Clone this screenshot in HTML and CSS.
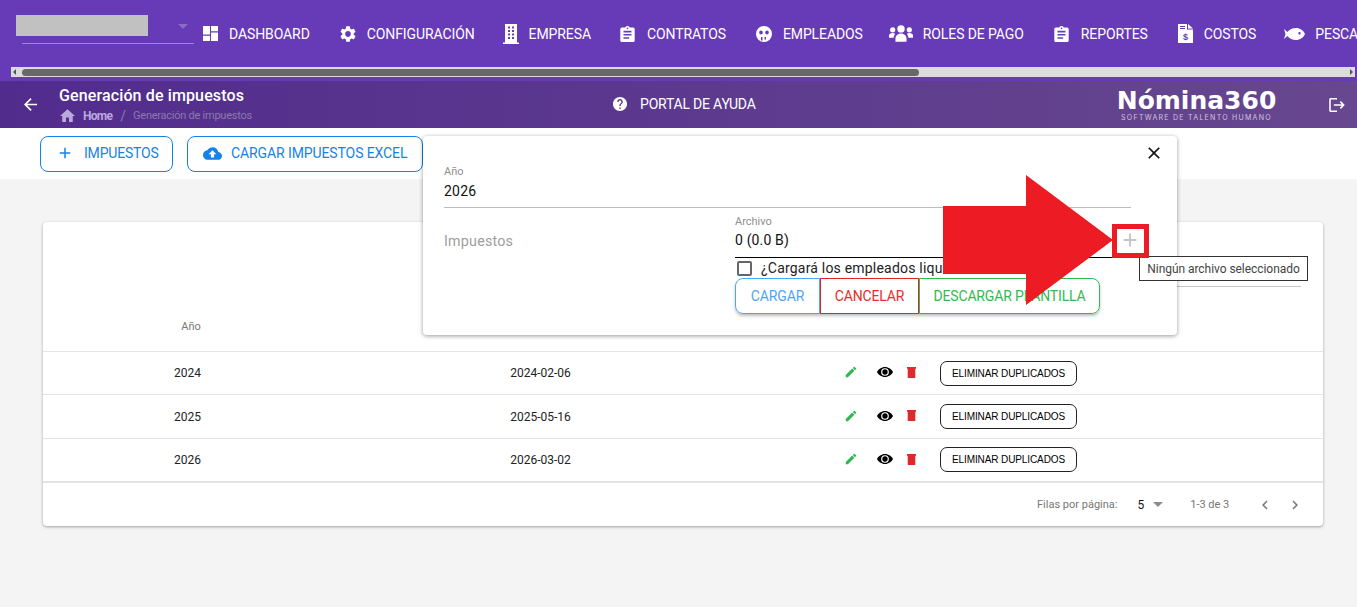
FILE: index.html
```html
<!DOCTYPE html>
<html lang="es">
<head>
<meta charset="utf-8">
<title>Generación de impuestos</title>
<link rel="stylesheet" href="styles.css">
</head>
<body>
<svg class="defs" width="0" height="0" aria-hidden="true">
  <symbol id="i-clip" viewBox="3 1 18 20"><path d="M19 3h-4.180C14.400 1.840 13.300 1 12 1c-1.300 0-2.400.840-2.820 2H5c-1.100 0-2 .9-2 2v14c0 1.100.9 2 2 2h14c1.100 0 2-.9 2-2V5c0-1.100-.9-2-2-2zm-7 0c.550 0 1 .450 1 1s-.450 1-1 1-1-.450-1-1 .450-1 1-1zm2 14H7v-2h7v2zm3-4H7v-2h10v2zm0-4H7V7h10v2z"/></symbol>
  <symbol id="i-edit" viewBox="0 0 24 24"><path d="M3 17.250V21h3.750L17.810 9.940l-3.750-3.750L3 17.250zM20.710 7.040c.390-.390.390-1.020 0-1.410l-2.340-2.340c-.390-.390-1.020-.390-1.410 0l-1.830 1.830 3.750 3.750 1.830-1.830z"/></symbol>
  <symbol id="i-eye" viewBox="0 0 24 24"><path fill-rule="evenodd" d="M12 4.500C6.500 4.500 2 8 0 12c2 4 6.500 7.500 12 7.500S22 16 24 12c-2-4-6.500-7.500-12-7.500zM12 6.200a5.800 5.800 0 1 0 0 11.600 5.800 5.800 0 0 0 0-11.600zM12 8a4 4 0 1 1 0 8 4 4 0 0 1 0-8z"/></symbol>
  <symbol id="i-trash" viewBox="0 0 9 11"><path d="M0 0h9v1.800H8.300V11H.7V1.800H0z"/></symbol>
</svg>

<header class="topbar">
  <div class="nav">
    <div class="company">
      <div class="company-mask"></div>
      <span class="company-caret"></span>
    </div>
    <a class="nav-item"><svg class="nav-icon ic-dash" viewBox="0 0 14 14"><path d="M0 0h6.500v8H0zM0 9h6.500v5H0zM7.500 0H14v5H7.500zM7.500 6H14v8H7.500z"/></svg>DASHBOARD</a>
    <a class="nav-item"><svg class="nav-icon ic-gear" viewBox="2.500 2 19 20"><path d="M19.140 12.940c.040-.3.060-.610.060-.940 0-.320-.020-.640-.070-.940l2.030-1.580a.490.490 0 0 0 .120-.610l-1.920-3.320a.488.488 0 0 0-.590-.220l-2.390.960c-.5-.380-1.030-.7-1.620-.940l-.360-2.540a.484.484 0 0 0-.480-.410h-3.840c-.240 0-.430.170-.470.410l-.360 2.540c-.590.240-1.130.570-1.620.940l-2.390-.960c-.220-.080-.470 0-.590.220L2.740 8.870c-.120.210-.080.470.120.610l2.030 1.580c-.050.3-.090.630-.090.940s.020.640.070.940l-2.030 1.580a.490.490 0 0 0-.120.610l1.920 3.320c.120.220.370.290.590.220l2.390-.960c.5.380 1.030.7 1.620.940l.360 2.540c.050.240.240.410.480.410h3.840c.240 0 .440-.17.470-.41l.360-2.540c.590-.240 1.130-.560 1.620-.940l2.390.960c.220.080.470 0 .590-.220l1.920-3.320c.120-.220.070-.470-.120-.610l-2.010-1.580zM12 15.600c-1.980 0-3.600-1.620-3.600-3.600s1.620-3.600 3.600-3.600 3.600 1.620 3.600 3.600-1.620 3.600-3.600 3.600z"/></svg>CONFIGURACIÓN</a>
    <a class="nav-item"><svg class="nav-icon ic-building" viewBox="0 0 16 20"><path fill-rule="evenodd" d="M2 0h12v18.500h2V20H0v-1.500h2zM5 2.500v2h2v-2zm4 0v2h2v-2zM5 6v2h2V6zm4 0v2h2V6zM5 9.500v2h2v-2zm4 0v2h2v-2zM5 13v2h2v-2zm4 0v2h2v-2z"/></svg>EMPRESA</a>
    <a class="nav-item"><svg class="nav-icon ic-clip"><use href="#i-clip"/></svg>CONTRATOS</a>
    <a class="nav-item"><svg class="nav-icon ic-face" viewBox="0 0 16 16"><path fill-rule="evenodd" d="M8 0a8 8 0 1 0 0 16A8 8 0 0 0 8 0zM5 4.500a1.800 2 0 1 1 0 4 1.800 2 0 0 1 0-4zm6 0a1.800 2 0 1 1 0 4 1.800 2 0 0 1 0-4zM5 11h1.500v3.500H5zm3.500 0H10v2.500H8.500z"/></svg>EMPLEADOS</a>
    <a class="nav-item"><svg class="nav-icon ic-people" viewBox="0 0 26 18"><circle cx="13" cy="4" r="4"/><circle cx="4" cy="5" r="2.800"/><circle cx="22" cy="5" r="2.800"/><path d="M7 18v-3.500c0-3 2.500-5.500 6-5.500s6 2.500 6 5.500V18zM0 13.500v-2C0 9.500 1.500 8.500 4 8.500c1.100 0 2 .3 2.700 1C5.700 10.500 5 12 5 13.500zM26 13.500v-2c0-2-1.500-3-4-3-1.100 0-2 .3-2.700 1 1 1 1.700 2.500 1.700 4z"/></svg>ROLES DE PAGO</a>
    <a class="nav-item"><svg class="nav-icon ic-clip ic-clip-r"><use href="#i-clip"/></svg>REPORTES</a>
    <a class="nav-item"><svg class="nav-icon ic-file" viewBox="0 0 15 19"><path fill-rule="evenodd" d="M0 0h9v5.500h6V19H0zM10 0l5 4.500h-5zM2 2v1h5V2zM2 4v1h5V4z"/><text class="file-dollar" x="7.500" y="16" text-anchor="middle">$</text></svg>COSTOS</a>
    <a class="nav-item"><svg class="nav-icon ic-fish" viewBox="0 0 21 12"><path fill-rule="evenodd" d="M0 1l3.500 3C5.500 1.500 8.500 0 12 0c4 0 7.500 2.500 9 6-1.500 3.500-5 6-9 6-3.500 0-6.500-1.500-8.500-4L0 11l1.500-5zM15.500 4a1.200 1.200 0 1 0 0 2.400 1.200 1.200 0 0 0 0-2.400z"/></svg>PESCA</a>
  </div>
  <div class="scrollbar">
    <span class="scroll-arrow scroll-arrow-left"></span>
    <div class="scroll-thumb"></div>
    <span class="scroll-arrow scroll-arrow-right"></span>
  </div>
</header>

<div class="pagebar">
  <svg class="back" viewBox="4 4 16 16"><path d="M20 11H7.830l5.590-5.590L12 4l-8 8 8 8 1.410-1.410L7.830 13H20v-2z"/></svg>
  <div class="pagebar-title">
    <h1>Generación de impuestos</h1>
    <div class="crumbs">
      <svg class="crumb-home" viewBox="2 3 20 17"><path d="M10 20v-6h4v6h5v-8h3L12 3 2 12h3v8z"/></svg>
      <span class="crumb-link">Home</span>
      <span class="crumb-sep">/</span>
      <span class="crumb-current">Generación de impuestos</span>
    </div>
  </div>
  <div class="help">
    <svg class="help-icon" viewBox="2 2 20 20"><path d="M12 2C6.480 2 2 6.480 2 12s4.480 10 10 10 10-4.480 10-10S17.520 2 12 2zm1 17h-2v-2h2v2zm2.070-7.750l-.9.920C13.450 12.900 13 13.500 13 15h-2v-.5c0-1.100.450-2.100 1.170-2.830l1.240-1.260c.370-.360.590-.860.590-1.410 0-1.100-.9-2-2-2s-2 .9-2 2H8c0-2.210 1.790-4 4-4s4 1.790 4 4c0 .880-.360 1.680-.930 2.250z"/></svg>
    PORTAL DE AYUDA
  </div>
  <div class="logo">
    <div class="logo-name">Nómina360</div>
    <div class="logo-sub">SOFTWARE DE TALENTO HUMANO</div>
  </div>
  <svg class="exit" viewBox="2 3 20 18"><path d="M17 7l-1.410 1.410L18.170 11H8v2h10.170l-2.580 2.580L17 17l5-5zM4 5h8V3H4c-1.100 0-2 .9-2 2v14c0 1.100.9 2 2 2h8v-2H4V5z"/></svg>
</div>

<div class="actions-band">
  <button class="outline-btn"><svg class="btn-icon" viewBox="0 0 24 24"><path d="M19 13h-6v6h-2v-6H5v-2h6V5h2v6h6v2z"/></svg>IMPUESTOS</button>
  <button class="outline-btn outline-btn-upload"><svg class="btn-icon" viewBox="0 0 24 24"><path d="M19.350 10.040C18.670 6.590 15.640 4 12 4 9.110 4 6.600 5.640 5.350 8.040 2.340 8.360 0 10.910 0 14c0 3.310 2.690 6 6 6h13c2.760 0 5-2.240 5-5 0-2.640-2.050-4.780-4.650-4.960zM14 13v4h-4v-4H7l5-5 5 5h-3z"/></svg>CARGAR IMPUESTOS EXCEL</button>
</div>

<main class="content">
  <section class="card">
    <div class="toolbar"><div class="search-line"></div></div>
    <div class="grid-row grid-head">
      <div class="cell cell-year">Año</div>
      <div class="cell"></div>
      <div class="cell"></div>
    </div>
    <div class="grid-row">
      <div class="cell">2024</div>
      <div class="cell">2024-02-06</div>
      <div class="cell-actions">
        <svg class="ic-edit"><use href="#i-edit"/></svg>
        <svg class="ic-eye"><use href="#i-eye"/></svg>
        <svg class="ic-trash"><use href="#i-trash"/></svg>
        <button class="dup-btn">ELIMINAR DUPLICADOS</button>
      </div>
    </div>
    <div class="grid-row grid-row-tall">
      <div class="cell">2025</div>
      <div class="cell">2025-05-16</div>
      <div class="cell-actions">
        <svg class="ic-edit"><use href="#i-edit"/></svg>
        <svg class="ic-eye"><use href="#i-eye"/></svg>
        <svg class="ic-trash"><use href="#i-trash"/></svg>
        <button class="dup-btn">ELIMINAR DUPLICADOS</button>
      </div>
    </div>
    <div class="grid-row grid-row-last">
      <div class="cell">2026</div>
      <div class="cell">2026-03-02</div>
      <div class="cell-actions">
        <svg class="ic-edit"><use href="#i-edit"/></svg>
        <svg class="ic-eye"><use href="#i-eye"/></svg>
        <svg class="ic-trash"><use href="#i-trash"/></svg>
        <button class="dup-btn">ELIMINAR DUPLICADOS</button>
      </div>
    </div>
    <div class="pager">
      <span>Filas por página:</span>
      <span class="pager-size">5</span>
      <span class="pager-caret"></span>
      <span class="pager-range">1-3 de 3</span>
      <svg class="pager-nav pager-prev" viewBox="0 0 24 24"><path d="M15.410 7.410L14 6l-6 6 6 6 1.410-1.410L10.830 12z"/></svg>
      <svg class="pager-nav pager-next" viewBox="0 0 24 24"><path d="M10 6L8.590 7.410 13.170 12l-4.580 4.590L10 18l6-6z"/></svg>
    </div>
  </section>
</main>

<aside class="popover">
  <svg class="close" viewBox="0 0 24 24"><path d="M19 6.410L17.590 5 12 10.590 6.410 5 5 6.410 10.590 12 5 17.590 6.410 19 12 13.410 17.590 19 19 17.590 13.410 12z"/></svg>
  <div class="field-year">
    <label class="field-label">Año</label>
    <div class="field-value">2026</div>
  </div>
  <div class="upload-row">
    <div class="upload-name">Impuestos</div>
    <div class="upload-main">
      <label class="field-label">Archivo</label>
      <div class="file-value">0 (0.0 B)</div>
      <div class="file-plus"><svg viewBox="0 0 24 24"><path d="M19 13h-6v6h-2v-6H5v-2h6V5h2v6h6v2z"/></svg></div>
      <div class="check-row"><span class="checkbox"></span><span>¿Cargará los empleados liquidados?</span></div>
      <div class="btn-group">
        <button class="grp grp-blue">CARGAR</button>
        <button class="grp grp-red">CANCELAR</button>
        <button class="grp grp-green">DESCARGAR PLANTILLA</button>
      </div>
    </div>
  </div>
</aside>

<div class="tip">Ningún archivo seleccionado</div>

<svg class="callout-arrow" viewBox="0 0 170 130"><path d="M0 31h83V0l87 65-87 65V99H0z"/></svg>
<div class="callout-box"></div>
</body>
</html>
```
FILE: styles.css
```css
* { box-sizing: border-box; }
html, body { margin: 0; height: 100%; }
body {
  font-family: Roboto, "Liberation Sans", sans-serif;
  background: #f4f4f4;
  color: #222;
  overflow: hidden;
  position: relative;
  display: flex;
  flex-direction: column;
}
.defs { position: absolute; }

.topbar { height: 81px; background: #673ab7; flex: none; }
.nav {
  height: 67px;
  display: flex;
  align-items: center;
  overflow: hidden;
  white-space: nowrap;
}
.company { width: 203px; height: 67px; flex: none; position: relative; }
.company-mask { position: absolute; left: 16px; top: 15px; width: 132px; height: 21px; background: #c1c1c1; }
.company::after { content: ""; position: absolute; left: 22px; top: 43px; width: 172px; height: 1px; background: #9d83d1; }
.company-caret {
  position: absolute; left: 178px; top: 24px;
  border-left: 5px solid transparent; border-right: 5px solid transparent; border-top: 5px solid #8a6cc4;
}
.nav-item {
  display: flex; align-items: center; flex: none;
  color: #fff; font-size: 14px; letter-spacing: -0.1px;
  margin-right: 30px;
}
.nav-icon { fill: #fff; margin-right: 11px; flex: none; }
.ic-dash { width: 15px; height: 15px; }
.ic-gear { width: 16px; height: 16px; }
.ic-building { width: 16px; height: 20px; margin-left: -2px; margin-right: 10px; }
.ic-clip { width: 15px; height: 16px; margin-left: -1px; margin-right: 12px; }
.ic-clip-r { margin-left: 0; margin-right: 12px; width: 15px; }
.ic-face { width: 16px; height: 16px; }
.ic-people { width: 24px; height: 17px; margin-left: -4px; margin-right: 10px; }
.ic-file { width: 15px; height: 19px; margin-left: 0; margin-right: 11px; }
.ic-fish { width: 21px; height: 12px; margin-left: -2px; margin-right: 10px; }
.file-dollar { font: 700 9px "Liberation Sans", sans-serif; fill: #673ab7; }

.scrollbar {
  height: 10px; margin: 0 2px 0 11px;
  background: #dcdcdc; display: flex; align-items: center;
}
.scroll-thumb { width: 897px; height: 7px; margin-left: 6px; background: #686868; border-radius: 4px; }
.scroll-arrow { border-top: 3px solid transparent; border-bottom: 3px solid transparent; }
.scroll-arrow-left { border-right: 3px solid #555; margin-left: 2px; }
.scroll-arrow-right { border-left: 3px solid #555; margin-left: auto; margin-right: 2px; }

.pagebar {
  height: 47px; flex: none; color: #fff;
  background: linear-gradient(90deg, #512c8d 0%, #67478f 100%);
  display: flex; align-items: center;
}
.back { width: 13px; height: 13px; fill: #fff; margin-left: 24px; flex: none; }
.pagebar-title { margin-left: 22px; width: 554px; flex: none; }
.pagebar-title h1 { margin: 0 0 3px; font-size: 16px; font-weight: 500; line-height: 19px; letter-spacing: .13px; }
.crumbs { display: flex; align-items: center; height: 16px; font-size: 11px; color: #8d78ae; white-space: nowrap; padding-left: 1px; }
.crumb-home { width: 15px; height: 13px; fill: #bba9dc; flex: none; }
.crumb-link { color: #bba9dc; font-size: 12px; font-weight: 700; margin-left: 8px; letter-spacing: -0.7px; }
.crumb-sep { margin: 0 7px 0 8px; font-size: 14px; }
.crumb-current { letter-spacing: -0.25px; }
.help { display: flex; align-items: center; font-size: 14px; letter-spacing: -0.2px; width: 503px; flex: none; padding-bottom: 1px; }
.help-icon { width: 14px; height: 14px; fill: #fff; margin-right: 13px; flex: none; }
.logo { width: 161px; flex: none; text-align: center; }
.logo-name { font-family: "DejaVu Sans", sans-serif; font-weight: 700; font-size: 25px; line-height: 25px; white-space: nowrap; }
.logo-sub { font-family: Inter, "Open Sans", sans-serif; font-size: 7px; line-height: 9px; letter-spacing: 1.27px; color: #cfc6dc; white-space: nowrap; }
.exit { width: 16px; height: 14px; fill: #fff; margin-left: 52px; flex: none; }

.actions-band { height: 51px; background: #fff; flex: none; display: flex; gap: 14px; padding: 8px 0 0 40px; }
.outline-btn {
  height: 36px; width: 133px; flex: none;
  display: flex; align-items: center;
  background: #fff; border: 1px solid #1583e6; border-radius: 8px;
  color: #1583e6; font: 14px Roboto, sans-serif; letter-spacing: -0.2px;
  padding: 0 0 2px 15px;
}
.outline-btn-upload { width: 236px; letter-spacing: -0.1px; }
.btn-icon { width: 18px; height: 18px; fill: #1583e6; margin-right: 10px; flex: none; }
.outline-btn-upload .btn-icon { width: 19px; height: 19px; margin-right: 9px; }

.content { flex: 1; padding: 43px 34px 0 43px; }
.card { background: #fff; border-radius: 4px; box-shadow: 0 1px 3px rgba(0,0,0,.35); height: 304px; }
.toolbar { height: 65px; display: flex; justify-content: flex-end; padding-right: 22px; }
.search-line { width: 300px; height: 65px; border-bottom: 1px solid #c4c4c4; }
.grid-row {
  display: grid; grid-template-columns: 288px 418px 1fr;
  height: 43px; align-items: center;
  border-bottom: 1px solid #e4e4e4;
  font-size: 12px; color: #222;
}
.grid-row-tall { height: 44px; }
.grid-row-last { border-bottom-width: 2px; height: 44px; }
.grid-head { height: 65px; align-items: end; color: #777; font-size: 11px; padding-bottom: 18px; }
.cell { text-align: center; padding-left: 1px; }
.cell-year { padding-left: 8px; }
.cell-actions { display: flex; align-items: center; padding-left: 95px; }
.ic-edit { width: 14px; height: 14px; fill: #2eb84f; flex: none; margin-top: -2px; }
.ic-eye { width: 16px; height: 16px; fill: #000; flex: none; margin: -2px 0 0 19px; }
.ic-trash { width: 9px; height: 11px; fill: #e1282d; flex: none; margin: -2px 0 0 14px; }
.dup-btn {
  width: 137px; height: 25px; margin-left: 24px; margin-top: 1px; flex: none; padding: 0;
  background: #fff; border: 1px solid #222; border-radius: 7px;
  font: 10px "Liberation Sans", sans-serif; letter-spacing: -0.1px; color: #000;
}
.grid-row-tall .dup-btn, .grid-row-last .dup-btn { margin-top: -1px; }
.pager { height: 43px; display: flex; align-items: center; font-size: 11px; color: #777; padding-left: 994px; }
.pager-size { color: #111; font-size: 12px; margin-left: 20px; }
.pager-caret { border-left: 5px solid transparent; border-right: 5px solid transparent; border-top: 5px solid #8c8c8c; margin-left: 9px; }
.pager-range { margin-left: 27px; }
.pager-nav { width: 18px; height: 18px; fill: #777; flex: none; }
.pager-prev { margin-left: 27px; }
.pager-next { margin-left: 12px; }

.popover {
  position: absolute; left: 423px; top: 136px; width: 754px; height: 199px;
  background: #fff; border-radius: 4px;
  box-shadow: 0 1px 4px rgba(0,0,0,.4);
  padding: 29px 21px 0;
}
.close { position: absolute; right: 13px; top: 7px; width: 20px; height: 20px; fill: #111; }
.field-label { display: block; font-size: 11px; line-height: 13px; color: #8f8f8f; }
.field-year { width: 687px; height: 43px; border-bottom: 1px solid #bdbdbd; }
.field-value { font-size: 14px; line-height: 20px; letter-spacing: .2px; margin-top: 3px; color: #111; }
.upload-row { display: flex; }
.upload-name { width: 291px; flex: none; font-size: 14.300px; color: #9e9e9e; padding-top: 24px; line-height: 18px; letter-spacing: .2px; }
.upload-main { width: 377px; flex: none; padding-top: 7px; position: relative; }
.file-value { font-size: 14px; line-height: 18px; margin-top: 3px; height: 24px; letter-spacing: .15px; color: #111; }
.upload-main::before { content: ""; position: absolute; left: 0; right: 0; top: 49px; height: 1px; background: #000; }
.file-plus { position: absolute; right: -29px; top: 21px; width: 22px; height: 22px; z-index: 2; }
.file-plus svg { width: 22px; height: 22px; fill: #c4c4c4; display: block; }
.check-row { display: flex; align-items: center; height: 20px; margin-top: 3px; font-size: 14px; letter-spacing: .2px; white-space: nowrap; color: #222; }
.checkbox { width: 15px; height: 15px; border: 2px solid #666; border-radius: 2px; margin: 0 9px 0 2px; flex: none; }
.btn-group { display: flex; width: 365px; height: 36px; border-radius: 8px; box-shadow: 0 2px 3px rgba(0,0,0,.25); }
.grp { height: 36px; background: #fff; font: 14px Roboto, sans-serif; letter-spacing: -0.15px; padding: 0; flex: none; border: 1px solid; }
.grp-blue { width: 85px; color: #4da6f5; border-color: #4da6f5; border-radius: 8px 0 0 8px; }
.grp-red { width: 99px; color: #ee2a2a; border-color: #e0262b; }
.grp-green { width: 181px; color: #2fbb50; border-color: #2fbb50; border-radius: 0 8px 8px 0; }

.tip {
  position: absolute; left: 1139px; top: 256px; width: 169px; height: 25px;
  background: #fff; border: 1px solid #333;
  font-size: 12px; line-height: 24px; text-align: center; color: #444; letter-spacing: -0.05px; white-space: nowrap;
}
.callout-arrow { position: absolute; left: 943px; top: 175px; width: 170px; height: 130px; fill: #ed1c24; }
.callout-box { position: absolute; left: 1112px; top: 224px; width: 37px; height: 34px; border: 5px solid #ed1c24; }
```
